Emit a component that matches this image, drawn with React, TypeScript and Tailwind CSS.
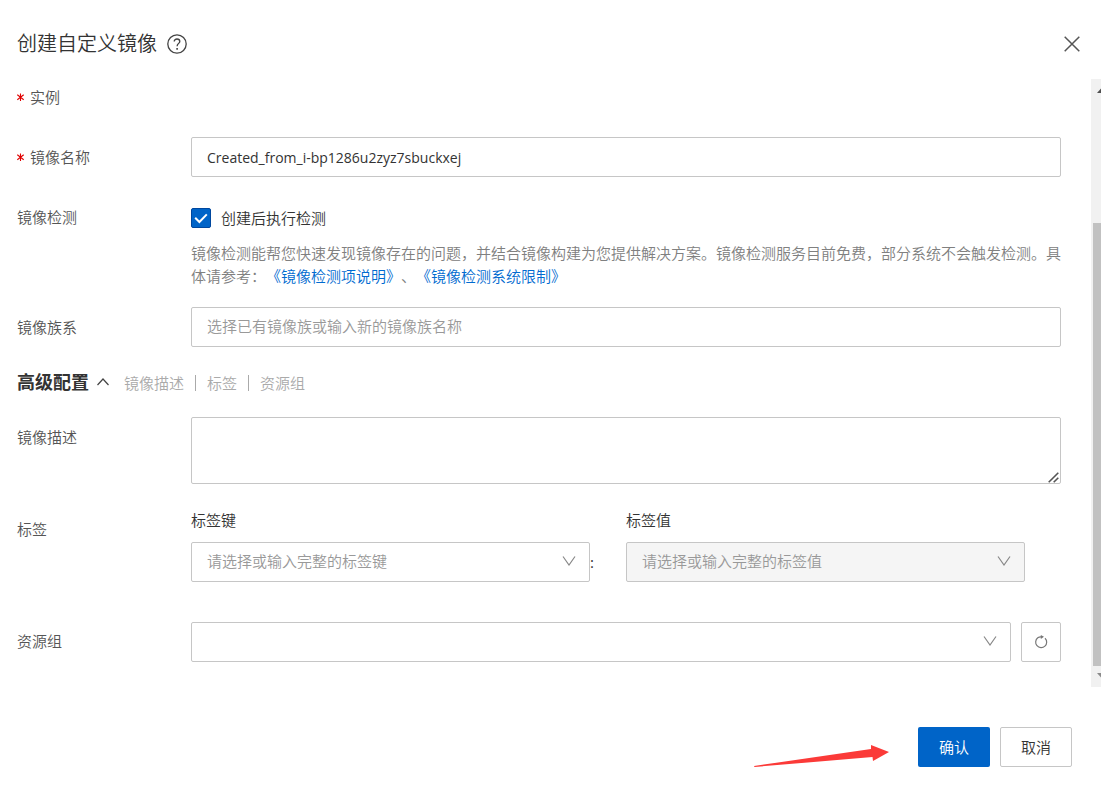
import React, { useState } from 'react';

const fieldCls = 'w-full h-10 px-[15px] border border-[#c6c6c6] rounded-xs bg-white text-[#333] placeholder:text-[#999] focus:outline-none focus:border-[#0064c8]';

function Chevron({ className = '' }: { className?: string }) {
  return (
    <svg className={className} width="14" height="10" viewBox="0 0 14 10" fill="none" stroke="currentColor" strokeWidth="1.2" aria-hidden="true">
      <path d="M1 0.5 L7 9 L13 0.5" />
    </svg>
  );
}

function FormRow({ label, htmlFor, required, className = '', labelClass = 'h-10', children }: { label: string; htmlFor?: string; required?: boolean; className?: string; labelClass?: string; children?: React.ReactNode }) {
  return (
    <div className={`flex items-start ${className}`}>
      <label htmlFor={htmlFor} className={`w-[174px] shrink-0 flex items-center text-[#555] ${labelClass}`}>
        {required && (
          <svg className="mr-[5px]" width="8" height="8" viewBox="0 0 8 8" stroke="#e00000" strokeWidth="1.1" aria-hidden="true">
            <path d="M3.5 0.5 V8 M0.3 1.7 L6.7 6.7 M6.7 1.7 L0.3 6.7" />
          </svg>
        )}
        {label}
      </label>
      <div className="flex-1 min-w-0">{children}</div>
    </div>
  );
}

function SelectBox({ id, placeholder, options, disabled }: { id: string; placeholder: string; options: string[]; disabled?: boolean }) {
  const [value, setValue] = useState('');
  return (
    <div className="relative flex-1 min-w-0">
      <select
        id={id}
        value={value}
        disabled={disabled}
        onChange={e => setValue(e.target.value)}
        className={`w-full h-10 pl-[15px] pr-10 pb-[2px] border border-[#c6c6c6] rounded-xs appearance-none opacity-100 focus:outline-none focus:border-[#0064c8] ${disabled ? 'bg-[#f5f5f5]' : 'bg-white'} ${value ? 'text-[#333]' : 'text-[#999]'}`}
      >
        <option value="">{placeholder}</option>
        {options.map(o => <option key={o} value={o}>{o}</option>)}
      </select>
      <Chevron className="absolute right-[14px] top-[14px] text-[#888] pointer-events-none" />
    </div>
  );
}

export default function App() {
  const [name, setName] = useState('Created_from_i-bp1286u2zyz7sbuckxej');
  const [family, setFamily] = useState('');
  const [desc, setDesc] = useState('');
  const [check, setCheck] = useState(true);
  const [expanded, setExpanded] = useState(true);

  return (
    <div className="min-h-screen bg-white flex flex-col text-[15px] text-[#333] font-[350] [text-spacing-trim:space-all] font-['Open_Sans','Noto_Sans_CJK_SC',sans-serif]">
      <header className="h-[79px] pl-[17px] pr-[21px] pt-[9px] flex items-center justify-between">
        <div className="flex items-center gap-[10px]">
          <h1 className="text-xl leading-7 font-[350]">创建自定义镜像</h1>
          <button type="button" aria-label="帮助">
            <svg width="20" height="20" viewBox="0 0 20 20" fill="none" stroke="#444" strokeWidth="1.3">
              <circle cx="10" cy="10" r="9.2" />
              <path d="M7.2 7.6 C7.2 5.9 8.4 5 10 5 C11.7 5 12.8 6 12.8 7.4 C12.8 9.3 10.1 9.6 10.1 12.2" />
              <path d="M10.1 14 V15.8" strokeWidth="1.6" />
            </svg>
          </button>
        </div>
        <button type="button" aria-label="关闭">
          <svg width="16" height="16" viewBox="0 0 16 16" stroke="#555" strokeWidth="1.5">
            <path d="M0.7 0.7 L15.3 15.3 M15.3 0.7 L0.7 15.3" />
          </svg>
        </button>
      </header>

      <div className="flex">
        <form className="flex-1 min-w-0 pl-[17px] pr-[30px] pb-[25px]" onSubmit={e => e.preventDefault()}>
          <FormRow label="实例" required className="mb-[22px]" labelClass="h-9" />

          <FormRow label="镜像名称" htmlFor="image-name" required className="mb-5">
            <input id="image-name" type="text" value={name} onChange={e => setName(e.target.value)} className={`${fieldCls} text-sm font-normal`} />
          </FormRow>

          <FormRow label="镜像检测" htmlFor="image-check" className="mb-[19px]">
            <label className="h-[42px] flex items-center gap-[10px]">
              <span className="relative w-5 h-5">
                <input id="image-check" type="checkbox" checked={check} onChange={e => setCheck(e.target.checked)} className="block w-5 h-5 appearance-none border border-[#c6c6c6] rounded-xs checked:bg-[#0064c8] checked:border-[#00479e]" />
                {check && (
                  <svg className="absolute inset-0 pointer-events-none" width="20" height="20" viewBox="0 0 20 20" fill="none" stroke="#fff" strokeWidth="2" aria-hidden="true">
                    <path d="M4.2 9.8 L8.4 14 L15.8 6.4" />
                  </svg>
                )}
              </span>
              创建后执行检测
            </label>
            <p className="pt-[3px] leading-[23px] text-[#808080]">
              镜像检测能帮您快速发现镜像存在的问题，并结合镜像构建为您提供解决方案。镜像检测服务目前免费，部分系统不会触发检测。具体请参考：
              <a href="#check-items" className="text-[#006ad0]">《镜像检测项说明》</a>、<a href="#check-limits" className="text-[#006ad0]">《镜像检测系统限制》</a>
            </p>
          </FormRow>

          <FormRow label="镜像族系" htmlFor="image-family" className="mb-4">
            <input id="image-family" type="text" value={family} onChange={e => setFamily(e.target.value)} placeholder="选择已有镜像族或输入新的镜像族名称" className={`${fieldCls} pb-[2px]`} />
          </FormRow>

          <div className="h-10 mb-[14px] flex items-center">
            <button type="button" aria-expanded={expanded} onClick={() => setExpanded(!expanded)} className="pb-[2px] flex items-center gap-2 text-lg font-bold">
              高级配置
              <svg className={expanded ? '' : 'rotate-180'} width="12" height="8" viewBox="0 0 12 8" fill="none" stroke="#444" strokeWidth="1.2" aria-hidden="true">
                <path d="M0.5 7 L6 1 L11.5 7" />
              </svg>
            </button>
            <div className="ml-[15px] flex items-center gap-[11px] text-[#aaa]">
              <span>镜像描述</span>
              <span className="w-px h-4 bg-[#aaa]" />
              <span>标签</span>
              <span className="w-px h-4 bg-[#aaa]" />
              <span>资源组</span>
            </div>
          </div>

          {expanded && (
            <>
              <FormRow label="镜像描述" htmlFor="image-desc" className="mb-6">
                <div className="relative">
                  <textarea id="image-desc" value={desc} onChange={e => setDesc(e.target.value)} className="block w-full h-[67px] px-[15px] py-2 border border-[#c6c6c6] rounded-xs resize-y [&::-webkit-resizer]:hidden focus:outline-none focus:border-[#0064c8]" />
                  <svg className="absolute right-[2px] bottom-[1px] pointer-events-none" width="11" height="11" viewBox="0 0 11 11" stroke="#555" strokeWidth="1.6" aria-hidden="true">
                    <path d="M0.7 10.3 L10.3 0.7 M5.7 10.3 L10.3 5.7" />
                  </svg>
                </div>
              </FormRow>

              <FormRow label="标签" htmlFor="tag-key" className="mb-10" labelClass="h-[42px]">
                <div className="grid grid-cols-2">
                  <div>
                    <label htmlFor="tag-key" className="block leading-6 mb-[10px]">标签键</label>
                    <div className="flex items-center">
                      <SelectBox id="tag-key" placeholder="请选择或输入完整的标签键" options={['env', 'project', 'owner']} />
                      <span className="w-9 font-normal">:</span>
                    </div>
                  </div>
                  <div className="pr-9">
                    <label htmlFor="tag-value" className="block leading-6 mb-[10px]">标签值</label>
                    <SelectBox id="tag-value" placeholder="请选择或输入完整的标签值" options={[]} disabled />
                  </div>
                </div>
              </FormRow>

              <FormRow label="资源组" htmlFor="resource-group" labelClass="h-[38px]">
                <div className="flex gap-[10px]">
                  <SelectBox id="resource-group" placeholder="" options={['默认资源组']} />
                  <button type="button" aria-label="刷新" className="w-10 h-10 border border-[#c6c6c6] rounded-xs flex items-center justify-center text-[#777]">
                    <svg width="14" height="14" viewBox="0 0 14 14" fill="none" stroke="currentColor" strokeWidth="1.2">
                      <path d="M11 3.2 A5.5 5.5 0 1 1 3.8 2.8 Q5.2 1.7 7.2 1.8" />
                      <path d="M6.8 0 L10 1.8 L6.8 3.9 Z" fill="currentColor" stroke="none" />
                    </svg>
                  </button>
                </div>
              </FormRow>
            </>
          )}
        </form>

        {/* scrollbar */}
        <div className="w-[10px] bg-[#f1f1f1] flex flex-col overflow-hidden" aria-hidden="true">
          <svg className="shrink-0" width="10" height="21" viewBox="0 0 10 21"><path d="M6 14 L10.5 9 V14 Z" fill="#505050" /></svg>
          <div className="basis-[123px]" />
          <div className="flex-1 ml-[2px] bg-[#c1c1c1]" />
          <svg className="shrink-0" width="10" height="21" viewBox="0 0 10 21"><path d="M6 7 H10.5 V12 Z" fill="#8a8a8a" /></svg>
        </div>
      </div>

      <footer className="pt-10 pb-[22px] pr-[29px] flex justify-end">
        <svg className="mr-[29px]" width="135" height="40" viewBox="0 0 135 40" fill="#fb3a38" aria-hidden="true">
          <path d="M0 39 L117 22 L117 18 L135 25 L119 34 L118.5 30 L0.5 40 Z" />
        </svg>
        <div className="flex gap-[10px]">
          <button type="button" className="w-[72px] h-10 rounded-xs bg-[#0064c8] text-white hover:bg-[#0057ad]">确认</button>
          <button type="button" className="w-[72px] h-10 rounded-xs border border-[#c6c6c6] bg-white hover:bg-[#f7f7f7]">取消</button>
        </div>
      </footer>
    </div>
  );
}
